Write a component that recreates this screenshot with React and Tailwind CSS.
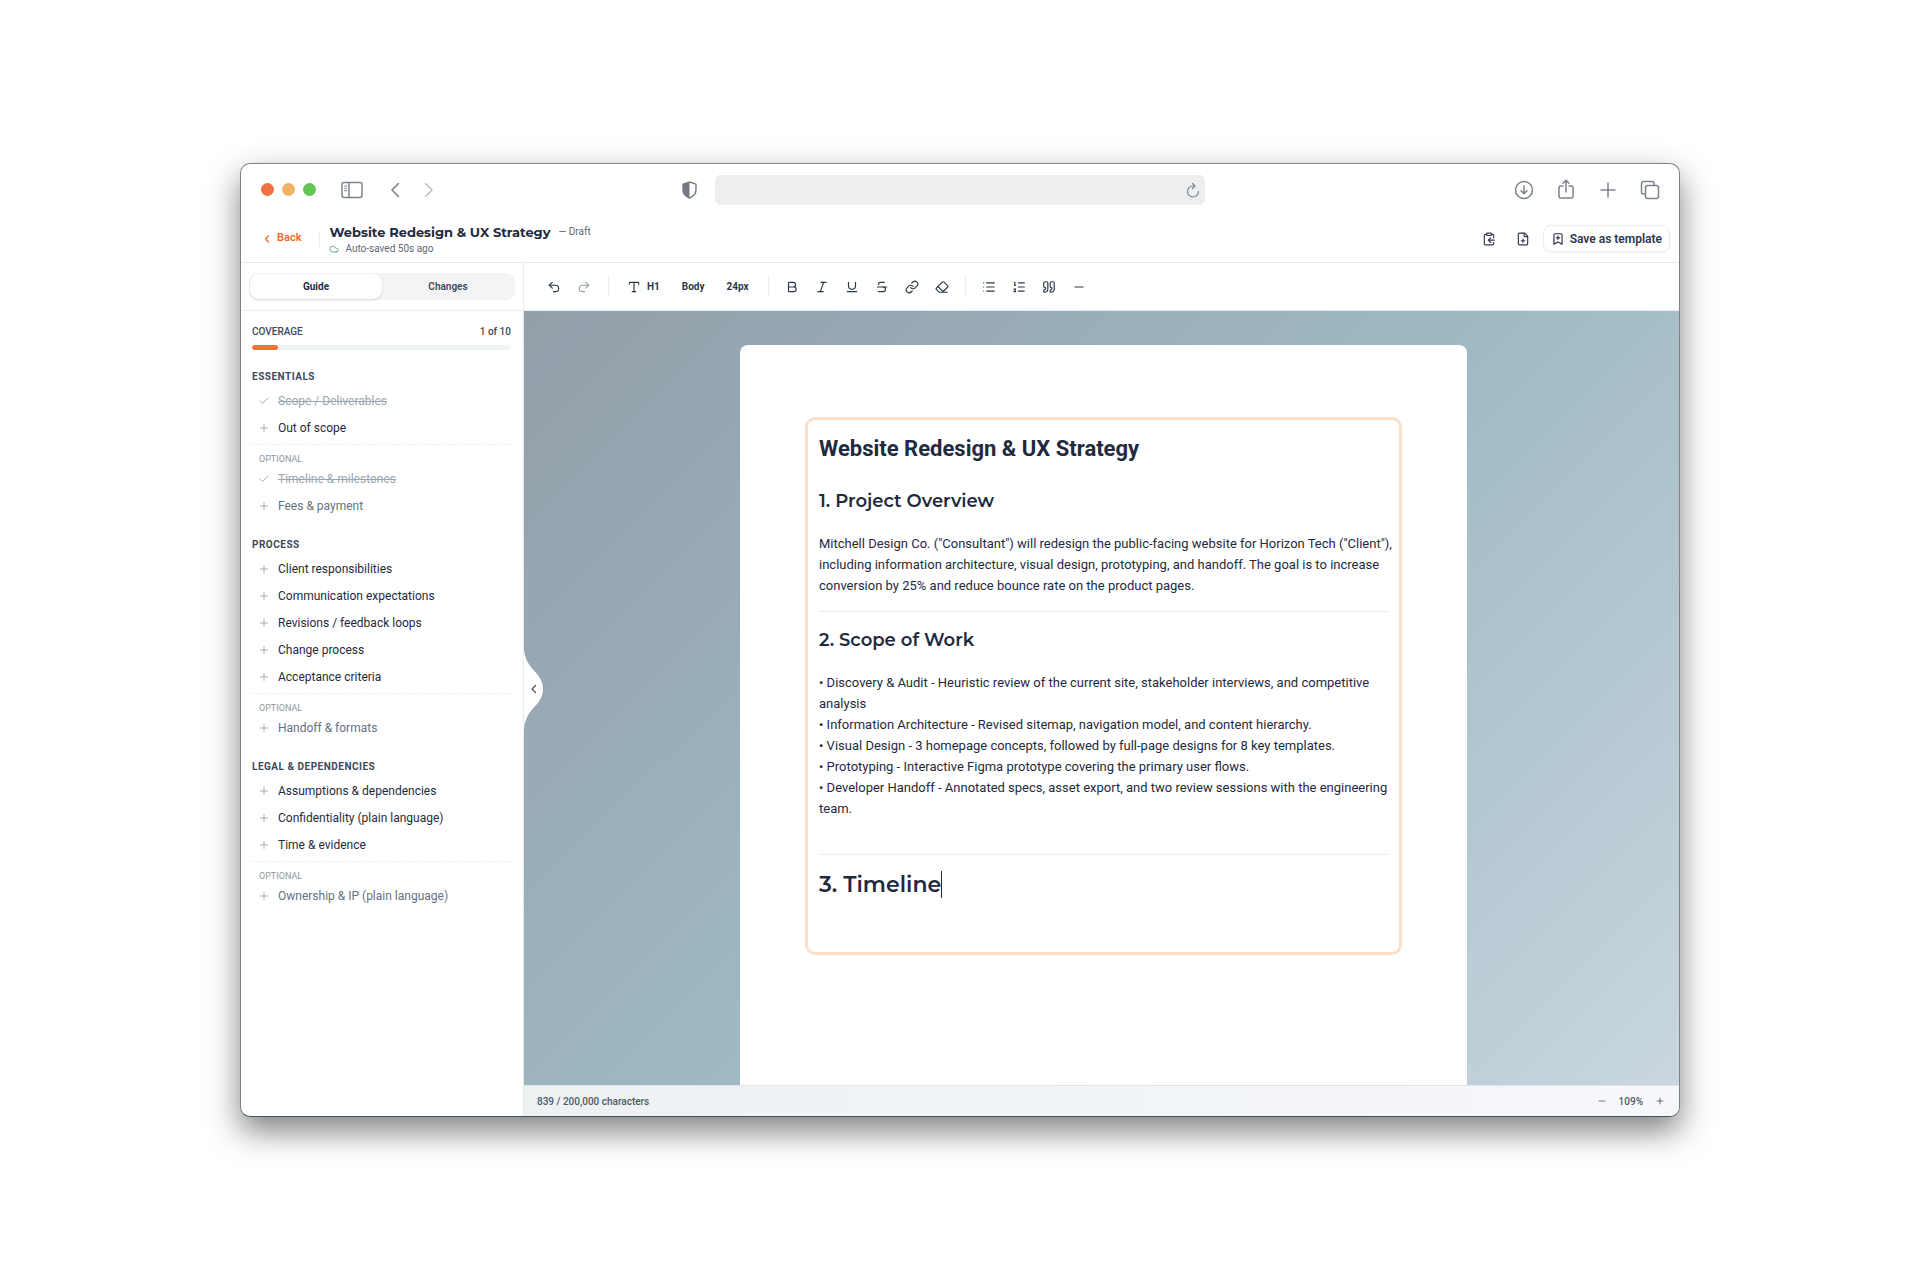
import React from "react";
import {
  Undo2, Redo2, Type, Bold, Italic, Underline, Strikethrough, Link, Eraser, List, ListOrdered, Quote,
  Minus, Plus, Check, ChevronLeft, Cloud, ClipboardCopy, FilePlus, BookmarkPlus,
} from "lucide-react";

const DISPLAY = "font-['Montserrat','Inter',sans-serif]";

const groups = [
  {
    title: "Essentials",
    items: [{ label: "Scope / Deliverables", done: true }, { label: "Out of scope" }],
    optional: [{ label: "Timeline & milestones", done: true }, { label: "Fees & payment" }],
  },
  {
    title: "Process",
    items: [
      { label: "Client responsibilities" },
      { label: "Communication expectations" },
      { label: "Revisions / feedback loops" },
      { label: "Change process" },
      { label: "Acceptance criteria" },
    ],
    optional: [{ label: "Handoff & formats" }],
  },
  {
    title: "Legal & dependencies",
    items: [
      { label: "Assumptions & dependencies" },
      { label: "Confidentiality (plain language)" },
      { label: "Time & evidence" },
    ],
    optional: [{ label: "Ownership & IP (plain language)" }],
  },
];

const scope = [
  "Discovery & Audit - Heuristic review of the current site, stakeholder interviews, and competitive analysis",
  "Information Architecture - Revised sitemap, navigation model, and content hierarchy.",
  "Visual Design - 3 homepage concepts, followed by full-page designs for 8 key templates.",
  "Prototyping - Interactive Figma prototype covering the primary user flows.",
  "Developer Handoff - Annotated specs, asset export, and two review sessions with the engineering team.",
];

function Glyph({ w = 22, h = 22, children }) {
  return (
    <svg width={w} height={h} viewBox={`0 0 ${w} ${h}`} fill="none" stroke="currentColor" strokeWidth="1.5" strokeLinecap="round" strokeLinejoin="round" aria-hidden="true">
      {children}
    </svg>
  );
}

function BrowserBar() {
  return (
    <div className="flex h-[51px] shrink-0 items-center text-[#7d838c]">
      <div className="flex flex-1 items-center pl-5">
        <div className="flex gap-2">
          <span className="size-[13px] rounded-full bg-[#f2703f]" />
          <span className="size-[13px] rounded-full bg-[#f3b067]" />
          <span className="size-[13px] rounded-full bg-[#61c454]" />
        </div>
        <button aria-label="Sidebar" className="ml-[25px]">
          <Glyph>
            <rect x="1" y="3.5" width="20" height="15" rx="2" />
            <path d="M8 3.5v15" />
            <path d="M3.6 7h1.9M3.6 9.3h1.9M3.6 11.6h1.9" strokeWidth="1.1" />
          </Glyph>
        </button>
        <button aria-label="Previous page" className="ml-[21px]">
          <Glyph><path d="M14.500 4.500 8 11l6.500 6.500" strokeWidth="1.6" /></Glyph>
        </button>
        <button aria-label="Next page" className="ml-3 text-[#bcc0c5]">
          <Glyph><path d="m7.500 4.500 6.500 6.500-6.500 6.500" strokeWidth="1.6" /></Glyph>
        </button>
      </div>
      <div className="mr-9 flex items-center gap-[18px]">
        <svg width="15" height="18" viewBox="0 0 15 18" aria-hidden="true">
          <path d="M7.500 1 14 3.200V9c0 4-3 6.500-6.500 8C4 15.500 1 13 1 9V3.200z" fill="none" stroke="#747a83" strokeWidth="1.400" />
          <path d="M7.500 1v16C4 15.500 1 13 1 9V3.200z" fill="#747a83" />
        </svg>
        <div className="flex h-[30px] w-[490px] items-center rounded-[5px] bg-[#eceeef] pr-1">
          <input aria-label="Address" className="h-full min-w-0 flex-1 bg-transparent px-3 text-xs outline-none" />
          <button aria-label="Reload">
            <Glyph w={16} h={18}>
              <path d="M13.500 10.500A5.500 5.500 0 1 1 8 5h1.500" strokeWidth="1.200" />
              <path d="M7.500 2.500 10 5 7.500 7.500" strokeWidth="1.200" />
            </Glyph>
          </button>
        </div>
      </div>
      <div className="flex flex-1 items-center justify-end gap-5 pr-[18px]">
        <button aria-label="Downloads">
          <Glyph><circle cx="11" cy="11" r="8.500" /><path d="M11 7v7.500M8 11.800l3 3 3-3" /></Glyph>
        </button>
        <button aria-label="Share">
          <Glyph><path d="M8 7H5.500A1.500 1.500 0 0 0 4 8.500v9A1.500 1.500 0 0 0 5.500 19h11a1.500 1.500 0 0 0 1.500-1.500v-9A1.500 1.500 0 0 0 16.500 7H14M11 13V1.500M8 4.200l3-3 3 3" /></Glyph>
        </button>
        <button aria-label="New tab">
          <Glyph><path d="M11 4v14M4 11h14" /></Glyph>
        </button>
        <button aria-label="Tabs">
          <Glyph>
            <rect x="6.500" y="6.500" width="13" height="13" rx="2" />
            <path d="M6.500 15H4.500a2 2 0 0 1-2-2V4.500a2 2 0 0 1 2-2H13a2 2 0 0 1 2 2v2" />
          </Glyph>
        </button>
      </div>
    </div>
  );
}

function Header() {
  return (
    <header className="flex h-12 shrink-0 items-center border-b border-[#e6ebee] pr-[9px] pl-5">
      <a href="#back" className="flex items-center gap-1 text-[11px] font-semibold text-[#f06a25]">
        <ChevronLeft size={12} strokeWidth={2.5} />
        Back
      </a>
      <span className="mr-[9px] ml-[18px] h-4 w-px bg-[#e6ebee]" />
      <div className="flex-1 pt-0.5">
        <div className="flex items-center gap-2">
          <h1 className={`${DISPLAY} text-[13px] leading-[18px] font-bold text-[#1f2a3d]`}>Website Redesign &amp; UX Strategy</h1>
          <span className="text-[10px] leading-[18px] text-[#5c6876]">— Draft</span>
        </div>
        <p className="flex items-center gap-1.5 text-[10px] leading-4 text-[#5c6876]">
          <Cloud size={10} className="text-[#4d9a7a]" />
          Auto-saved 50s ago
        </p>
      </div>
      <div className="flex items-center text-[#2b384a]">
        <button aria-label="Copy to clipboard" className="mr-5"><ClipboardCopy size={14} /></button>
        <button aria-label="New file" className="mr-[13px]"><FilePlus size={14} /></button>
        <button className="flex h-[27px] items-center gap-[5px] rounded-lg border border-[#e9edf0] px-[7px] text-[12px] font-semibold shadow-xs">
          <BookmarkPlus size={14} />
          Save as template
        </button>
      </div>
    </header>
  );
}

function GuideItem({ label, done, optional }) {
  const Icon = done ? Check : Plus;
  const tone = done ? "text-[#9aa6b0] line-through" : optional ? "text-[#65727f]" : "text-[#1f2a3d]";
  return (
    <li>
      <button className="flex h-[27px] w-full items-center gap-2 pl-[6px] text-left">
        <Icon size={12} strokeWidth={2} className="text-[#a3afb8]" />
        <span className={`text-[12px] ${tone}`}>{label}</span>
      </button>
    </li>
  );
}

function Sidebar() {
  return (
    <aside className="flex w-[283px] shrink-0 flex-col border-r border-[#e6ebee] text-[#3d4a59]">
      <div className="flex h-12 shrink-0 items-center border-b border-[#eceff1] px-2">
        <div role="tablist" className="flex h-[27px] flex-1 rounded-[9px] bg-[#f2f4f6] p-px text-[10px]">
          <button role="tab" aria-selected="true" className="flex-1 rounded-[9px] bg-white font-bold text-[#1f2a3d] shadow-sm">Guide</button>
          <button role="tab" aria-selected="false" className="flex-1 font-semibold">Changes</button>
        </div>
      </div>
      <div className="px-[11px] pr-3">
        <div className="mt-3 flex h-4 items-center justify-between">
          <span className="text-[10px] font-medium">COVERAGE</span>
          <span className="text-[10px] font-medium">1 of 10</span>
        </div>
        <div role="progressbar" aria-valuenow={1} aria-valuemax={10} aria-label="Coverage" className="mt-1.5 h-[5px] overflow-hidden rounded-full bg-[#f1f4f5]">
          <div className="h-full w-1/10 rounded-full bg-[#f7703a]" />
        </div>
        <div className="mt-[19px] flex flex-col gap-[18px]">
          {groups.map((g) => (
            <section key={g.title}>
              <h2 className="mb-0.5 h-4 text-[10px] leading-4 font-bold tracking-wider uppercase">{g.title}</h2>
              <ul>{g.items.map((i) => <GuideItem key={i.label} {...i} />)}</ul>
              <div className="mt-[3px] border-t border-dashed border-[#eceff1] pt-2">
                <h3 className="h-3 pl-[7px] text-[9px] leading-3 text-[#8a97a2]">OPTIONAL</h3>
                <ul>{g.optional.map((i) => <GuideItem key={i.label} {...i} optional />)}</ul>
              </div>
            </section>
          ))}
        </div>
      </div>
    </aside>
  );
}

function Tool({ label, icon: Icon, className = "" }) {
  return (
    <button aria-label={label} className={`flex size-[14px] items-center justify-center ${className}`}>
      <Icon size={14} strokeWidth={2} />
    </button>
  );
}

function Toolbar() {
  return (
    <div role="toolbar" aria-label="Formatting" className="flex h-12 shrink-0 items-center border-b border-[#e6ebee] pl-[23px] text-[10px] font-bold text-[#2b384a]">
      <div className="flex gap-4">
        <Tool label="Undo" icon={Undo2} />
        <Tool label="Redo" icon={Redo2} className="text-[#93a0aa]" />
      </div>
      <span className="ml-[17px] h-5 w-px bg-[#e6ebee]" />
      <button className="ml-[18px] flex items-center gap-1.5"><Type size={14} />H1</button>
      <button className="ml-[22px]">Body</button>
      <button className="ml-[22px]">24px</button>
      <span className="ml-[19px] h-5 w-px bg-[#e6ebee]" />
      <div className="ml-4 flex gap-4">
        <Tool label="Bold" icon={Bold} />
        <Tool label="Italic" icon={Italic} />
        <Tool label="Underline" icon={Underline} />
        <Tool label="Strikethrough" icon={Strikethrough} />
        <Tool label="Link" icon={Link} />
        <Tool label="Clear formatting" icon={Eraser} />
      </div>
      <span className="ml-4 h-5 w-px bg-[#e6ebee]" />
      <div className="ml-4 flex gap-4">
        <Tool label="Bulleted list" icon={List} />
        <Tool label="Numbered list" icon={ListOrdered} />
        <Tool label="Quote" icon={Quote} />
        <Tool label="Divider" icon={Minus} />
      </div>
    </div>
  );
}

function Paper() {
  return (
    <article className="w-[727px] rounded-t-lg bg-white px-[65px] pt-[72px] text-[#1f2a3d]">
      <div className="rounded-[10px] border-3 border-[#fbdfc6] px-[11px] pb-[53px]">
        <h2 className="mt-[15px] text-[22px] leading-7 font-bold">Website Redesign &amp; UX Strategy</h2>
        <h3 className={`${DISPLAY} mt-6 text-[18px] leading-7 font-semibold`}>1. Project Overview</h3>
        <p className="-mr-2 mt-[18px] text-[13px] leading-[21px]">
          Mitchell Design Co. ("Consultant") will redesign the public-facing website for Horizon Tech ("Client"), including information architecture, visual design, prototyping, and handoff. The goal is to increase conversion by 25% and reduce bounce rate on the product pages.
        </p>
        <hr className="mt-[15px] border-[#e9edf0]" />
        <h3 className={`${DISPLAY} mt-[14px] text-[18px] leading-7 font-semibold`}>2. Scope of Work</h3>
        <ul className="mt-[18px] text-[13px] leading-[21px]">
          {scope.map((s) => <li key={s}>{`• ${s}`}</li>)}
        </ul>
        <hr className="mt-[35px] border-[#e9edf0]" />
        <div className="mt-4 flex">
          <h3 className={`${DISPLAY} text-[22px] leading-7 font-semibold`}>3. Timeline</h3>
          <span className="h-[27px] w-px bg-[#1f2a3d]" />
        </div>
      </div>
    </article>
  );
}

export default function App() {
  return (
    <main className="flex h-screen w-full flex-col bg-white px-[12.5%] py-[163px] font-['Roboto',sans-serif]">
      <div className="flex min-h-0 flex-1 flex-col overflow-hidden rounded-[10px] border border-[#7d8289] border-b-[#3f5661] bg-white shadow-[0_14px_32px_rgba(0,0,0,0.5)]">
        <BrowserBar />
        <Header />
        <div className="flex min-h-0 flex-1">
          <Sidebar />
          <div className="flex min-w-0 flex-1 flex-col">
            <Toolbar />
            <div className="relative flex min-h-0 flex-1 justify-center overflow-hidden bg-linear-135 from-[#939ea9] via-[#9fb9c2] to-[#c9d6e0] pt-[34px] pl-1">
              <button aria-label="Collapse guide" className="absolute top-[336px] left-0 h-[84px] w-5 text-[#4c5967]">
                <svg width="20" height="84" viewBox="0 0 20 84" fill="none" aria-hidden="true">
                  <path d="M0 0c0 10 4 17 9.500 23C15 29 19 34 19 42s-4 13-9.500 19C4 67 0 74 0 84z" fill="#fff" />
                  <path d="m11.500 38.500-3.500 3.500 3.500 3.500" stroke="currentColor" strokeWidth="1.300" strokeLinecap="round" strokeLinejoin="round" />
                </svg>
              </button>
              <Paper />
            </div>
            <footer className="flex h-[31px] shrink-0 items-center justify-between border-t border-[#dfe5e8] bg-linear-to-r from-[#edf1f2] to-[#f6f7fa] pr-[14px] pl-[13px] text-[10px] font-medium text-[#4c5967]">
              <span>839 / 200,000 characters</span>
              <div className="flex items-center gap-3">
                <button aria-label="Zoom out"><Minus size={10} /></button>
                <span>109%</span>
                <button aria-label="Zoom in"><Plus size={10} /></button>
              </div>
            </footer>
          </div>
        </div>
      </div>
    </main>
  );
}
